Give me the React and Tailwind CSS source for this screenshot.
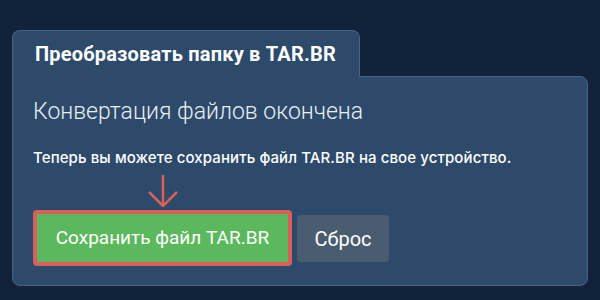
export default function App() {
  return (
    <div className="w-[600px] h-[300px] bg-[#10233a] pt-[30px] px-[12px]" style={{ fontFamily: "Roboto, sans-serif" }}>
      <div className="flex flex-col w-[576px]">
        <div className="relative z-10 w-[348px] h-[47px] -mb-px bg-[#2d4a6b] border border-b-0 border-[#4a6384] rounded-t-[8px] pl-[22px] flex items-center">
          <span className="text-[20px] font-bold text-white tracking-[0.2px]">Преобразовать папку в TAR.BR</span>
        </div>
        <div className="bg-[#2d4a6b] border border-[#4a6384] rounded-[8px] rounded-tl-none px-[20px] pt-[20px] h-[210px]">
          <h2 className="text-[23px] font-light text-[#e9eef4] leading-[30px]">Конвертация файлов окончена</h2>
          <p className="mt-[21px] text-[15px] font-medium text-white leading-[20px] tracking-[0.1px]" style={{ fontFamily: "Inter, sans-serif" }}>
            Теперь вы можете сохранить файл TAR.BR на свое устройство.
          </p>
          <div className="mt-[7px] flex items-end gap-[5px]">
            <div className="flex flex-col items-center">
              <svg width="30" height="32" viewBox="0 0 30 32" className="mb-[3px]">
                <path d="M15 0 V30.5 M1 17 L15 31 L29 17" fill="none" stroke="#d9605a" strokeWidth="2.5" />
              </svg>
              <button className="w-[259px] h-[56px] bg-[#5cb85c] border-[4px] border-[#d9605a] rounded-[4px] text-white text-[19px]">
                Сохранить файл TAR.BR
              </button>
            </div>
            <button className="w-[92px] h-[47px] mb-[4px] bg-[#4a5d70] rounded-[4px] text-white text-[20px]">
              Сброс
            </button>
          </div>
        </div>
      </div>
    </div>
  );
}
